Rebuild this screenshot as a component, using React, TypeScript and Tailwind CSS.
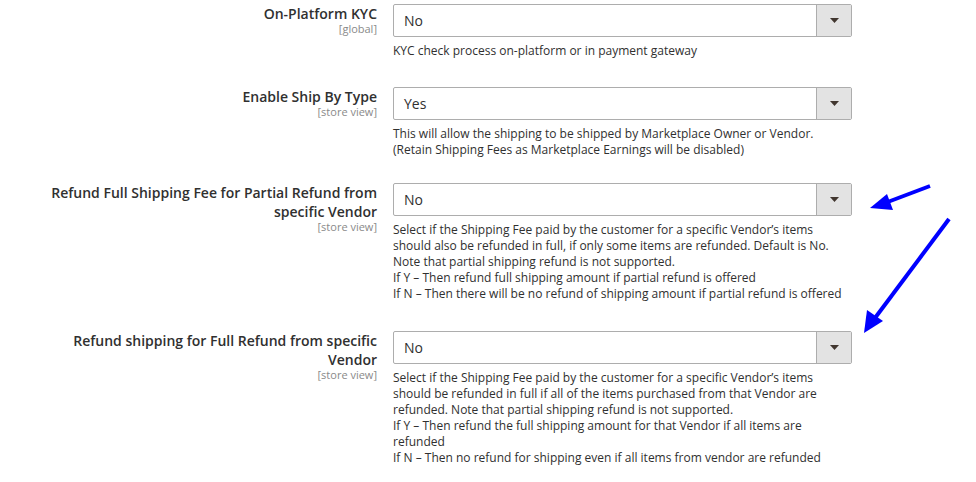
import React from "react";

type Row = {
  label: string[];
  scope: string;
  value: string;
  note: string[];
  gap: string;
};

const rows: Row[] = [
  {
    label: ["On-Platform KYC"],
    scope: "[global]",
    value: "No",
    note: ["KYC check process on-platform or in payment gateway"],
    gap: "mb-[28px]",
  },
  {
    label: ["Enable Ship By Type"],
    scope: "[store view]",
    value: "Yes",
    note: [
      "This will allow the shipping to be shipped by Marketplace Owner or Vendor.",
      "(Retain Shipping Fees as Marketplace Earnings will be disabled)",
    ],
    gap: "mb-[25px]",
  },
  {
    label: ["Refund Full Shipping Fee for Partial Refund from", "specific Vendor"],
    scope: "[store view]",
    value: "No",
    note: [
      "Select if the Shipping Fee paid by the customer for a specific Vendor\u2019s items",
      "should also be refunded in full, if only some items are refunded. Default is No.",
      "Note that partial shipping refund is not supported.",
      "If Y \u2013 Then refund full shipping amount if partial refund is offered",
      "If N \u2013 Then there will be no refund of shipping amount if partial refund is offered",
    ],
    gap: "mb-[29px]",
  },
  {
    label: ["Refund shipping for Full Refund from specific", "Vendor"],
    scope: "[store view]",
    value: "No",
    note: [
      "Select if the Shipping Fee paid by the customer for a specific Vendor\u2019s items",
      "should be refunded in full if all of the items purchased from that Vendor are",
      "refunded. Note that partial shipping refund is not supported.",
      "If Y \u2013 Then refund the full shipping amount for that Vendor if all items are",
      "refunded",
      "If N \u2013 Then no refund for shipping even if all items from vendor are refunded",
    ],
    gap: "mb-0",
  },
];

function SelectBox({ value }: { value: string }) {
  return (
    <div className="flex h-[33px] w-[459px] rounded-[2px] border border-[#adadad] bg-white">
      <div className="flex flex-1 items-center pl-[10px] text-[14px] text-[#303030]">
        {value}
      </div>
      <div className="flex w-[35px] items-center justify-center border-l border-[#adadad] bg-[#e3e3e3]">
        <svg width="9" height="5" viewBox="0 0 9 5">
          <path d="M0 0 H9 L4.5 5 Z" fill="#41362f" />
        </svg>
      </div>
    </div>
  );
}

export default function App() {
  return (
    <div className="relative h-[482px] w-[976px] overflow-hidden bg-white font-['Open_Sans',sans-serif]">
      <div className="flex flex-col pt-[4px]">
        {rows.map((row) => (
          <div key={row.label.join(" ")} className={`flex items-start ${row.gap}`}>
            <div className="w-[377px] pl-[39px] text-right">
              <div className="text-[14px] font-semibold leading-[19px] text-[#303030]">
                {row.label.map((l) => (
                  <div key={l}>{l}</div>
                ))}
              </div>
              <div className="text-[11px] leading-[11px] text-[#8a8a8a]">{row.scope}</div>
            </div>
            <div className="ml-[16px]">
              <SelectBox value={row.value} />
              <div className="mt-[6px] text-[12px] leading-[16px] text-[#303030]">
                {row.note.map((n) => (
                  <div key={n} className="whitespace-nowrap">
                    {n}
                  </div>
                ))}
              </div>
            </div>
          </div>
        ))}
      </div>

      {/* annotation arrows */}
      <svg
        className="pointer-events-none absolute left-0 top-0"
        width="976"
        height="482"
        viewBox="0 0 976 482"
      >
        <line x1="930" y1="186" x2="885" y2="203" stroke="#0000ff" strokeWidth="4" />
        <polygon points="870,208 887,194 893,210" fill="#0000ff" />
        <line x1="949" y1="219" x2="875" y2="318" stroke="#0000ff" strokeWidth="4" />
        <polygon points="864,333 867,310 883,321" fill="#0000ff" />
      </svg>
    </div>
  );
}
